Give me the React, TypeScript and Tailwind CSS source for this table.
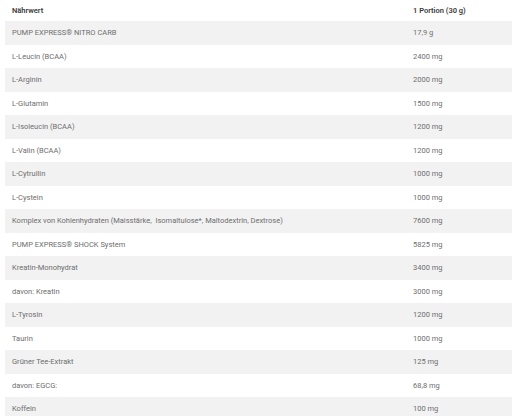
const rows: [string, string][] = [
  ["PUMP EXPRESS® NITRO CARB", "17,9 g"],
  ["L-Leucin (BCAA)", "2400 mg"],
  ["L-Arginin", "2000 mg"],
  ["L-Glutamin", "1500 mg"],
  ["L-Isoleucin (BCAA)", "1200 mg"],
  ["L-Valin (BCAA)", "1200 mg"],
  ["L-Cytrullin", "1000 mg"],
  ["L-Cystein", "1000 mg"],
  ["Komplex von Kohlenhydraten (Maisstärke,  Isomaltulose*, Maltodextrin, Dextrose)", "7600 mg"],
  ["PUMP EXPRESS® SHOCK System", "5825 mg"],
  ["Kreatin-Monohydrat", "3400 mg"],
  ["davon: Kreatin", "3000 mg"],
  ["L-Tyrosin", "1200 mg"],
  ["Taurin", "1000 mg"],
  ["Grüner Tee-Extrakt", "125 mg"],
  ["davon: EGCG:", "68,8 mg"],
  ["Koffein", "100 mg"],
]

export default function App() {
  return (
    <div className="w-[512px] h-[416px] overflow-hidden bg-white pl-[5px] font-['Roboto',sans-serif] text-[7.5px]">
      <div className="flex h-[21px] items-center font-semibold text-[#3a3a3a]">
        <div className="w-[408px] pl-[7px]">Nährwert</div>
        <div className="flex-1">1 Portion (30 g)</div>
      </div>
      {rows.map(([name, value], i) => (
        <div
          key={name}
          className={`flex h-[23.5px] items-center text-[#6e6e6e] ${i % 2 === 0 ? "bg-[#f2f2f2]" : "bg-white"}`}
        >
          <div className="w-[408px] pl-[7px] whitespace-pre">{name}</div>
          <div className="flex-1">{value}</div>
        </div>
      ))}
    </div>
  )
}
